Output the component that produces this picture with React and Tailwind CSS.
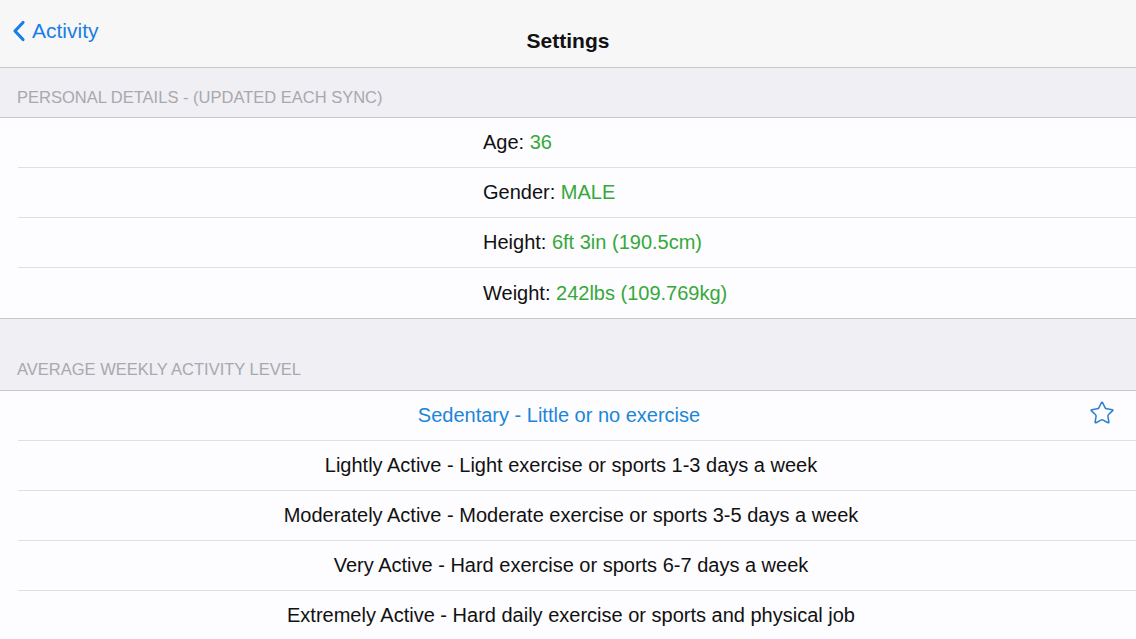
import { Star } from 'lucide-react'

const personal = [
  { label: 'Age:', value: '36' },
  { label: 'Gender:', value: 'MALE' },
  { label: 'Height:', value: '6ft 3in (190.5cm)' },
  { label: 'Weight:', value: '242lbs (109.769kg)' },
]

const levels = [
  'Sedentary - Little or no exercise',
  'Lightly Active - Light exercise or sports 1-3 days a week',
  'Moderately Active - Moderate exercise or sports 3-5 days a week',
  'Very Active - Hard exercise or sports 6-7 days a week',
  'Extremely Active - Hard daily exercise or sports and physical job',
]

function Row({ children, last }) {
  return (
    <div className="bg-[#fdfcfe] pl-[18px]">
      <div className={`relative h-[50px] flex items-center ${last ? '' : 'border-b border-[#e0dfe4]'}`}>
        {children}
      </div>
    </div>
  )
}

function App() {
  const selected = 0

  return (
    <div className="h-[639px] overflow-hidden bg-[#efeff4] font-['Liberation_Sans',Arial,sans-serif]">
      {/* Nav bar */}
      <header className="h-[68px] bg-[#f7f7f8] border-b border-[#c8c7cc] relative flex items-center justify-center">
        <button className="absolute left-[11px] top-[15px] flex items-center text-[#1a7ee3] text-[21px]">
          <svg width="16" height="22" viewBox="0 0 16 22" className="mr-[5px]">
            <path d="M12 2.5 L4 11 L12 19.5" fill="none" stroke="currentColor" strokeWidth="3.2" strokeLinecap="round" strokeLinejoin="round" />
          </svg>
          Activity
        </button>
        <h1 className="text-[21px] font-bold text-[#111] mt-[14px]">Settings</h1>
      </header>

      {/* Personal details */}
      <div className="h-[49px] flex items-end px-[17px] pb-[7px] text-[16.5px] text-[#a9a8ad] uppercase">
        Personal Details - (Updated Each Sync)
      </div>
      <section className="border-t border-b border-[#c8c7cc]">
        {personal.map((p, i) => (
          <Row key={p.label} last={i === personal.length - 1}>
            <div className="pl-[465px] -mt-[1px] text-[20px] text-[#111]">
              {p.label} <span className="text-[#35a93a]">{p.value}</span>
            </div>
          </Row>
        ))}
      </section>

      {/* Activity level */}
      <div className="h-[71px] flex items-end px-[17px] pb-[8px] text-[16.5px] text-[#a9a8ad] uppercase">
        Average Weekly Activity Level
      </div>
      <section className="border-t border-[#c8c7cc]">
        {levels.map((l, i) => (
          <Row key={l} last={i === levels.length - 1}>
            <div className={`flex-1 text-center text-[20px] -ml-[12px] -mt-[2px] ${i === selected ? 'text-[#1a86d9] mr-[24px]' : 'text-[#111]'}`}>
              {l}
            </div>
            {i === selected && (
              <Star className="absolute right-[21px] top-[9px] w-[26px] h-[26px] text-[#2a7fcf]" strokeWidth={1.4} />
            )}
          </Row>
        ))}
      </section>
    </div>
  )
}

export default App
